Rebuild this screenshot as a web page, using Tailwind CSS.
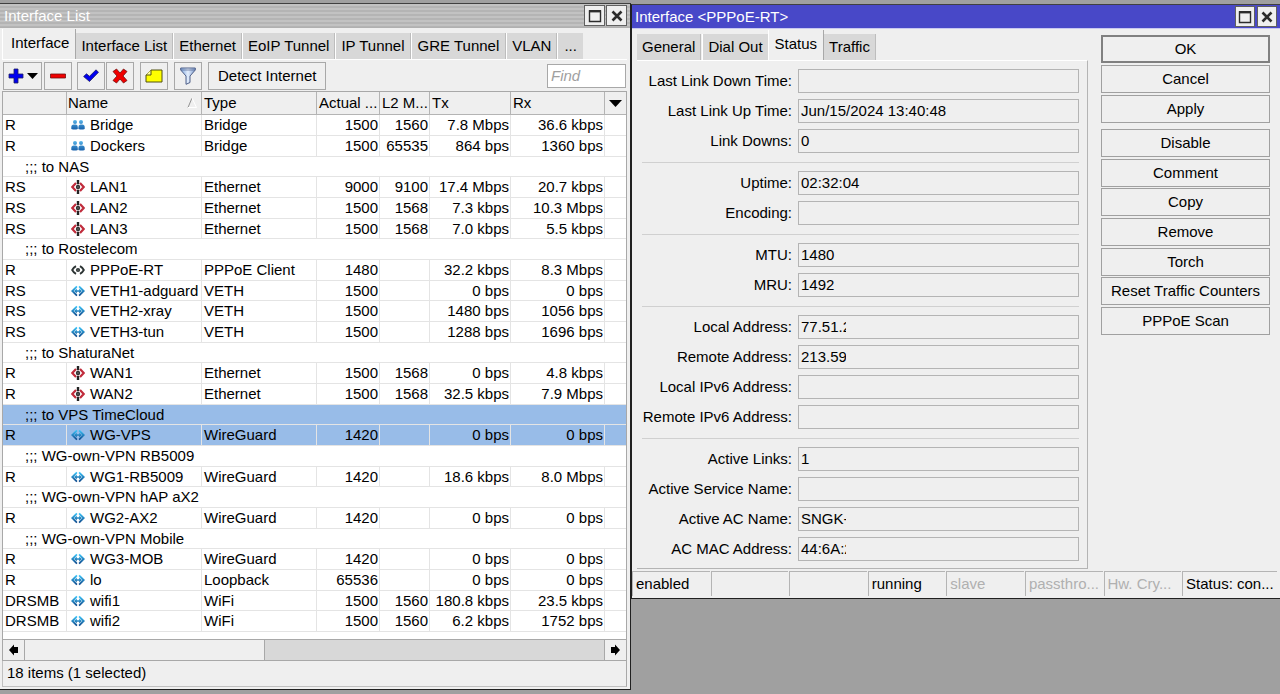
<!DOCTYPE html>
<html lang="en">
<head>
<meta charset="utf-8">
<title>Interface List</title>
<script src="https://cdn.jsdelivr.net/npm/@tailwindcss/browser@4"></script>
</head>
<body class="min-h-screen bg-[#a0a0a0] pt-[3px] font-['Liberation_Sans',Arial,sans-serif] text-[15px] leading-5 text-black">

<svg class="absolute size-0" aria-hidden="true">
  <defs>
    <linearGradient id="blue" gradientUnits="userSpaceOnUse" x1="0" y1="2" x2="0" y2="12"><stop offset="0" stop-color="#3cc8fc"/><stop offset="1" stop-color="#0c4488"/></linearGradient>
    <linearGradient id="people" gradientUnits="userSpaceOnUse" x1="0" y1="2" x2="0" y2="12"><stop offset="0" stop-color="#58b4e8"/><stop offset="1" stop-color="#145ca8"/></linearGradient>
    <linearGradient id="glass" x1="0" y1="0" x2="1" y2="0"><stop offset="0" stop-color="#7fa8e0"/><stop offset=".5" stop-color="#e4eefc"/><stop offset="1" stop-color="#7c9cd0"/></linearGradient>
  </defs>
  <symbol id="i-bridge" viewBox="0 0 14 14">
    <circle cx="4" cy="4" r="2" fill="url(#people)"/><circle cx="10" cy="4" r="2" fill="url(#people)"/>
    <path d="M.3 11V9q0-2.500 2.500-2.500h2.200Q6.800 6.500 6.800 9v2q-3 1-6.500 0zM7.400 11V9q0-2.500 2-2.500h1.800q2.500 0 2.500 2.500v2q-3 1-6.300 0z" fill="url(#people)"/>
  </symbol>
  <symbol id="i-eth" viewBox="0 0 14 14">
    <path d="M5 3 1.300 7 5 11M9 3l3.700 4L9 11" fill="none" stroke="#c02c3c" stroke-width="2.200"/>
    <path d="M5.800 0h2.400v4H5.800zM5.800 10h2.400v4H5.800z" fill="#222"/><circle cx="7" cy="7" r="2.200" fill="#333"/><circle cx="7" cy="7" r=".7" fill="#999"/>
    <path d="M6.500 3.500h1v7h-1z" fill="#333" opacity=".6"/>
  </symbol>
  <symbol id="i-ppp" viewBox="0 0 14 14">
    <path d="M5 3.200Q2.500 4.500 1.200 7q1.300 2.500 3.800 3.800M9 3.200Q11.500 4.500 12.800 7q-1.300 2.500-3.800 3.800" fill="none" stroke="#2c3434" stroke-width="1.900"/>
    <circle cx="7" cy="7" r="2.100" fill="#2c3434"/><circle cx="7" cy="7" r=".6" fill="#aaa"/>
  </symbol>
  <symbol id="i-veth" viewBox="0 0 14 14">
    <path d="M5.300 1.800 6.500 3 2.700 7l3.800 4-1.200 1.200L0 7zM8.700 1.800 7.500 3l3.800 4-3.800 4 1.200 1.200L14 7zM3.200 7l2.600-2.600v1.800h2.400V4.400L10.800 7 8.200 9.600V7.800H5.800v1.800z" fill="url(#blue)"/>
  </symbol>
  <symbol id="i-max" viewBox="0 0 14 14"><path d="M1.500 2h11v10.500h-11z" fill="none" stroke="#2c2c2c" stroke-width="1.400"/><path d="M1 1h12v2.400H1z" fill="#2c2c2c"/></symbol>
  <symbol id="i-close" viewBox="0 0 14 14"><path d="m2.500 2.500 9 9m0-9-9 9" fill="none" stroke="#2c2c2c" stroke-width="2.600"/></symbol>
</svg>

<main class="grid grid-cols-[631fr_649fr] items-start">

  <!-- Interface list -->
  <section class="border-y border-r border-[#202020] border-t-[#404040] bg-[#efefef] pr-[3px] pb-[2px] pl-[2px]">
    <header class="-mr-[3px] -ml-[2px] flex h-6 items-center border-b border-[#b0b0b0] bg-[repeating-linear-gradient(#c2c2c2_0_2px,#b4b4b4_2px_4px)] pr-[3px] pl-1 text-white">
      <h1 class="flex-1">Interface List</h1>
      <button aria-label="Maximize" class="mr-px flex h-[21px] w-[21px] items-center justify-center border border-[#606060] bg-[#efefef]"><svg class="size-[14px]"><use href="#i-max"/></svg></button>
      <button aria-label="Close" class="flex h-[21px] w-[21px] items-center justify-center border border-[#606060] bg-[#efefef]"><svg class="size-[14px]"><use href="#i-close"/></svg></button>
    </header>

    <nav class="flex h-[31px] items-end pt-[1px]">
      <button class="h-[30px] border-r border-[#a8a8a8] border-l border-l-white bg-[#efefef] pr-[6px] pb-[2px] pl-2">Interface</button>
      <button class="h-[26px] border-r border-[#bdbdbd] bg-[#d8d8d8] px-[5px]">Interface List</button>
      <button class="h-[26px] border-r border-[#bdbdbd] border-l border-l-white bg-[#d8d8d8] px-[5px]">Ethernet</button>
      <button class="h-[26px] border-r border-[#bdbdbd] border-l border-l-white bg-[#d8d8d8] px-[5px]">EoIP Tunnel</button>
      <button class="h-[26px] border-r border-[#bdbdbd] border-l border-l-white bg-[#d8d8d8] px-[5px]">IP Tunnel</button>
      <button class="h-[26px] border-r border-[#bdbdbd] border-l border-l-white bg-[#d8d8d8] px-[6px]">GRE Tunnel</button>
      <button class="h-[26px] border-r border-[#bdbdbd] border-l border-l-white bg-[#d8d8d8] px-[5px]">VLAN</button>
      <button aria-label="More tabs" class="h-[26px] border-l border-white bg-[#d8d8d8] px-[6px]">...</button>
    </nav>

    <div class="flex h-8 items-center border-t border-white">
      <button aria-label="Add" class="ml-px flex h-7 w-[39px] items-center justify-center gap-[3px] border border-[#a8a8a8]">
        <svg class="size-4" viewBox="0 0 16 16"><path d="M6 1h4v5h5v4h-5v5H6v-5H1V6h5z" fill="#0000f0" stroke="#202060" stroke-width=".8"/></svg>
        <svg class="h-[6px] w-[11px]" viewBox="0 0 11 6"><path d="M0 0h11L5.500 6z"/></svg>
      </button>
      <button aria-label="Remove" class="ml-[2px] flex size-7 items-center justify-center border border-[#a8a8a8]"><svg class="size-4" viewBox="0 0 16 16"><path d="M.5 6h15v4H.5z" fill="#f00000" stroke="#701010" stroke-width=".8"/></svg></button>
      <button aria-label="Enable" class="ml-[5px] flex size-7 items-center justify-center border border-[#a8a8a8]"><svg class="size-4" viewBox="0 0 16 16"><path d="M.6 8.500 3.500 5.800l3 2.500L13 1.800l2.500 2.500-9 9.200z" fill="#0000f0" stroke="#202060" stroke-width=".8"/></svg></button>
      <button aria-label="Disable" class="ml-px flex size-7 items-center justify-center border border-[#a8a8a8]"><svg class="size-4" viewBox="0 0 16 16"><path d="M1 3.500 4.500 1 8 5l3.500-4L15 3.500 11 8l4 4.500-3.500 2.500L8 11l-3.500 4L1 12.500 5 8z" fill="#f00000" stroke="#701010" stroke-width=".8"/></svg></button>
      <button aria-label="Comment" class="ml-[6px] flex size-7 items-center justify-center border border-[#a8a8a8]"><svg class="h-[14px] w-[18px]" viewBox="0 0 18 14"><path d="M6 1h11v12H1V6z" fill="#ffff00" stroke="#505010"/><path d="M6 1v5H1" fill="#ffffa0" stroke="#505010"/></svg></button>
      <button aria-label="Filter" class="ml-[6px] flex size-7 items-center justify-center border border-[#a8a8a8]"><svg class="h-[18px] w-4" viewBox="0 0 16 18"><path d="M.7 1h14.600v2L10 9v6.500L6 17.300V9L.7 3z" fill="url(#glass)" stroke="#506088"/><path d="M1 3h14" stroke="#506088" stroke-width=".7"/></svg></button>
      <button class="ml-[6px] h-7 border border-[#a8a8a8] px-[9px]">Detect Internet</button>
      <input aria-label="Find" placeholder="Find" class="mr-px ml-auto h-6 w-[79px] border border-[#a8a8a8] bg-white px-[3px] italic placeholder:text-[#a0a0a0]">
    </div>

    <div class="border-x border-t border-[#a8a8a8] bg-white pb-[7px]">
      <table class="w-full table-fixed border-separate border-spacing-0">
        <colgroup><col class="w-[64px]"><col class="w-[135px]"><col class="w-[115px]"><col class="w-[63px]"><col class="w-[50px]"><col class="w-[81px]"><col class="w-[94px]"><col></colgroup>
        <thead>
          <tr class="h-[23px] bg-[#efefef] text-left whitespace-nowrap [&>th]:border-r [&>th]:border-b [&>th]:border-[#b4b4b4] [&>th]:p-0 [&>th]:font-normal">
            <th aria-label="Flags"></th>
            <th><span class="flex items-center justify-between pr-1 pl-px">Name<svg class="h-[10px] w-[10px]" viewBox="0 0 10 10"><path d="M5 0 1 9.500" stroke="#909090" fill="none"/><path d="m5 0 4.500 9.500H1" stroke="#fff" fill="none"/></svg></span></th>
            <th><span class="pl-0.5">Type</span></th><th><span class="pl-0.5">Actual ...</span></th><th><span class="pl-0.5">L2 M...</span></th><th><span class="pl-0.5">Tx</span></th><th><span class="pl-0.5">Rx</span></th>
            <th class="border-r-0!"><button aria-label="Columns" class="flex w-full justify-center"><svg class="h-[7px] w-[13px]" viewBox="0 0 13 7"><path d="M0 0h13L6.500 7z"/></svg></button></th>
          </tr>
        </thead>
        <tbody id="rows"></tbody>
      </table>
    </div>

    <div class="flex h-[22px] border border-[#a8a8a8] bg-[#d8d8d8]">
      <button aria-label="Scroll left" class="flex w-[22px] items-center justify-center border-r border-[#a8a8a8] bg-[#efefef]"><svg class="h-3 w-[9px]" viewBox="0 0 9 12"><path d="M0 6 5 .5V3h4v6H5v2.500z"/></svg></button>
      <div class="w-[240px] border-r border-[#a8a8a8] bg-[#efefef]"></div>
      <button aria-label="Scroll right" class="ml-auto flex w-[22px] items-center justify-center border-l border-[#a8a8a8] bg-[#efefef]"><svg class="h-3 w-[9px]" viewBox="0 0 9 12"><path d="M9 6 4 .5V3H0v6h4v2.500z"/></svg></button>
    </div>
    <footer class="h-[26px] border-x border-b border-[#c0c0c0] border-r-[#a8a8a8] pt-[2px] pl-[4px]">18 items (1 selected)</footer>
  </section>

  <!-- Interface details -->
  <section class="mt-px border-y border-l border-[#202020] border-t-[#404040] bg-[#efefef]">
    <header class="flex h-6 items-center border-b border-[#c8c8f0] bg-[#4848c8] pr-[3px] pl-[3px] text-white">
      <h2 class="flex-1">Interface &lt;PPPoE-RT&gt;</h2>
      <button aria-label="Maximize" class="mr-0.5 flex h-[21px] w-5 items-center justify-center border border-[#606060] bg-[#efefef]"><svg class="size-[14px]"><use href="#i-max"/></svg></button>
      <button aria-label="Close" class="flex h-[21px] w-5 items-center justify-center border border-[#606060] bg-[#efefef]"><svg class="size-[14px]"><use href="#i-close"/></svg></button>
    </header>

    <div class="flex">
      <div class="flex-1 pl-[5px]">
        <nav class="flex h-[31px] items-end">
          <button class="h-[26px] border-r border-[#bdbdbd] bg-[#d8d8d8] px-[5px]">General</button>
          <button class="ml-px h-[26px] border-l border-white bg-[#d8d8d8] px-[5px]">Dial Out</button>
          <button class="h-[30px] border-r border-[#a8a8a8] border-l border-l-white px-[6px] pb-[2px]">Status</button>
          <button class="h-[26px] border-r border-[#bdbdbd] bg-[#d8d8d8] px-[5px]">Traffic</button>
        </nav>
        <form id="status" class="flex flex-col gap-[6px] border-t border-r border-b border-[#b4b4b4] border-t-white pt-2 pr-2 pb-[7px] pl-[5px]"></form>
      </div>

      <div class="flex w-[192px] flex-col pt-[6px] pr-[10px] pl-[13px]">
        <div class="flex flex-col gap-[2px]">
          <button class="h-7 border-2 border-[#808080]">OK</button>
          <button class="h-7 border border-[#a0a0a0]">Cancel</button>
          <button class="h-7 border border-[#a0a0a0]">Apply</button>
        </div>
        <div class="mt-[6px] flex h-[206px] flex-col justify-between">
          <button class="h-7 border border-[#a0a0a0]">Disable</button>
          <button class="h-7 border border-[#a0a0a0]">Comment</button>
          <button class="h-7 border border-[#a0a0a0]">Copy</button>
          <button class="h-7 border border-[#a0a0a0]">Remove</button>
          <button class="h-7 border border-[#a0a0a0]">Torch</button>
          <button class="h-7 border border-[#a0a0a0] whitespace-nowrap">Reset Traffic Counters</button>
          <button class="h-7 border border-[#a0a0a0]">PPPoE Scan</button>
        </div>
      </div>
    </div>

    <footer class="mt-px grid h-7 grid-cols-[repeat(7,157fr)_192fr] gap-px pt-px pr-[3px] pb-[2px] whitespace-nowrap [&>div]:border-t [&>div]:border-l [&>div]:border-[#b4b4b4] [&>div]:pt-[2px] [&>div]:pl-[3px]">
      <div>enabled</div><div></div><div></div><div>running</div>
      <div class="text-[#b0b0b0]">slave</div><div class="text-[#b0b0b0]">passthro...</div><div class="text-[#b0b0b0]">Hw. Cry...</div><div>Status: con...</div>
    </footer>
  </section>
</main>

<script>
const rows = [
  ['R','bridge','Bridge','Bridge','1500','1560','7.8 Mbps','36.6 kbps'],
  ['R','bridge','Dockers','Bridge','1500','65535','864 bps','1360 bps'],
  'to NAS',
  ['RS','eth','LAN1','Ethernet','9000','9100','17.4 Mbps','20.7 kbps'],
  ['RS','eth','LAN2','Ethernet','1500','1568','7.3 kbps','10.3 Mbps'],
  ['RS','eth','LAN3','Ethernet','1500','1568','7.0 kbps','5.5 kbps'],
  'to Rostelecom',
  ['R','ppp','PPPoE-RT','PPPoE Client','1480','','32.2 kbps','8.3 Mbps'],
  ['RS','veth','VETH1-adguard','VETH','1500','','0 bps','0 bps'],
  ['RS','veth','VETH2-xray','VETH','1500','','1480 bps','1056 bps'],
  ['RS','veth','VETH3-tun','VETH','1500','','1288 bps','1696 bps'],
  'to ShaturaNet',
  ['R','eth','WAN1','Ethernet','1500','1568','0 bps','4.8 kbps'],
  ['R','eth','WAN2','Ethernet','1500','1568','32.5 kbps','7.9 Mbps'],
  'to VPS TimeCloud',
  ['R','veth','WG-VPS','WireGuard','1420','','0 bps','0 bps'],
  'WG-own-VPN RB5009',
  ['R','veth','WG1-RB5009','WireGuard','1420','','18.6 kbps','8.0 Mbps'],
  'WG-own-VPN hAP aX2',
  ['R','veth','WG2-AX2','WireGuard','1420','','0 bps','0 bps'],
  'WG-own-VPN Mobile',
  ['R','veth','WG3-MOB','WireGuard','1420','','0 bps','0 bps'],
  ['R','veth','lo','Loopback','65536','','0 bps','0 bps'],
  ['DRSMB','veth','wifi1','WiFi','1500','1560','180.8 kbps','23.5 kbps'],
  ['DRSMB','veth','wifi2','WiFi','1500','1560','6.2 kbps','1752 bps'],
];
const selected = [14, 15];
document.getElementById('rows').innerHTML = rows.map((r, i) => {
  const bg = selected.includes(i) ? 'bg-[#98bce8]' : '';
  const open = `<tr class="h-[21px] nth-[3n]:h-5 whitespace-nowrap leading-[19px] [&>td]:border-b [&>td]:border-[#e4e4e4] [&>td]:p-0 [&>td]:align-top ${bg}">`;
  if (typeof r === 'string') return `${open}<td colspan="8"><span class="pl-[22px]">;;; ${r}</span></td></tr>`;
  const [flags, icon, name, type, ...nums] = r;
  return `${open}<td class="border-r"><span class="pl-0.5">${flags}</span></td>
    <td class="border-r"><span class="flex items-center gap-[5px] pl-1"><svg class="size-[14px] shrink-0"><use href="#i-${icon}"/></svg>${name}</span></td>
    <td class="border-r"><span class="pl-0.5">${type}</span></td>
    ${nums.map(n => `<td class="border-r text-right"><span class="pr-px">${n}</span></td>`).join('')}<td></td></tr>`;
}).join('');

const groups = [
  [['Last Link Down Time',''],['Last Link Up Time','Jun/15/2024 13:40:48'],['Link Downs','0']],
  [['Uptime','02:32:04'],['Encoding','']],
  [['MTU','1480'],['MRU','1492']],
  [['Local Address','77.51.2',1],['Remote Address','213.59',1],['Local IPv6 Address',''],['Remote IPv6 Address','']],
  [['Active Links','1'],['Active Service Name',''],['Active AC Name','SNGK-',1],['AC MAC Address','44:6A:2',1]],
];
document.getElementById('status').innerHTML = groups.map(g => g.map(([label, value, cut]) => {
  const id = label.toLowerCase().replaceAll(' ', '-');
  return `<div class="flex h-6 items-center"><label for="${id}" class="w-[150px] text-right whitespace-nowrap">${label}:</label>
    <div class="ml-[6px] flex h-6 flex-1 border border-[#b4b4b4] pl-[2px]"><input id="${id}" readonly value="${value}" class="${cut ? 'w-[45px]' : 'w-full'} bg-transparent outline-none"></div></div>`;
}).join('')).join('<hr class="mt-[3px] mb-[2px] border-[#d0d0d0]">');
</script>
</body>
</html>
